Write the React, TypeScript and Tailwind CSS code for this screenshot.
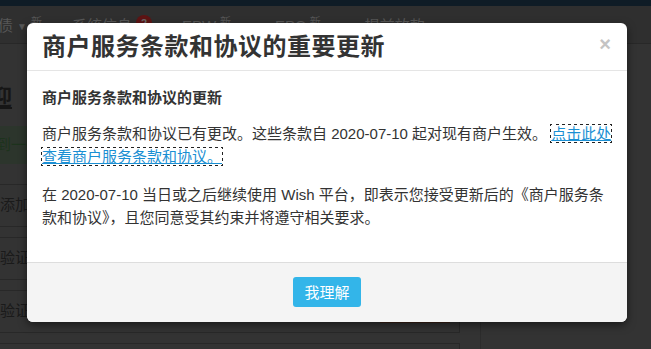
import React from "react";

const font = { fontFamily: '"Liberation Sans", Arial, "Noto Sans CJK SC", sans-serif' };

function NavItem({ children }: { children: React.ReactNode }) {
  return <div className="flex items-start gap-1 text-[15px] text-[#575757] whitespace-nowrap">{children}</div>;
}

export default function App() {
  return (
    <div className="relative w-[651px] h-[349px] overflow-hidden bg-[#333333]" style={font}>
      {/* background page (dimmed) */}
      <div className="flex flex-col h-full">
        <div className="h-[6px] shrink-0 bg-[#0f1c26]" />
        <div className="h-[38px] shrink-0 bg-[#2f2f2f] border-b border-[#282828] flex items-center gap-[30px] pt-[4px]">
          <NavItem>
            <span className="-ml-[2px]">债</span>
            <span className="text-[10px] mt-[4px]">▼</span>
            <span className="text-[11px] -mt-[1px]">新</span>
          </NavItem>
          <NavItem>
            <span>系统信息</span>
            <span className="w-[16px] h-[16px] rounded-full bg-[#5e1414] text-[#6a6a6a] text-[11px] font-bold flex items-center justify-center">2</span>
          </NavItem>
          <NavItem>
            <span>EPW</span>
            <span className="text-[11px] -mt-[1px]">新</span>
            <span className="text-[10px] mt-[4px]">▼</span>
          </NavItem>
          <NavItem>
            <span>EPC</span>
            <span className="text-[11px] -mt-[1px]">新</span>
            <span className="text-[10px] mt-[4px]">▼</span>
          </NavItem>
          <NavItem>
            <span>提前放款</span>
          </NavItem>
        </div>
        <div className="flex flex-1 min-h-0">
          <div className="w-[480px] shrink-0 flex flex-col">
            <div className="h-[82px] shrink-0 flex items-end pb-[17px]">
              <span className="text-[22px] font-bold text-[#161616] underline -ml-[10px] leading-none">迎</span>
            </div>
            <div className="h-[38px] shrink-0 bg-[#2c352c] flex items-center text-[15px] text-[#1d331d] -ml-[4px] w-[440px]">到一些</div>
            <div className="h-[20px] shrink-0" />
            <div className="w-[460px] flex flex-col gap-[10px]">
              <div className="h-[43px] shrink-0 border-y border-[#282828] flex items-center text-[15px] text-[#1a1a1a]">添加</div>
              <div className="h-[43px] shrink-0 border border-l-0 border-[#282828] flex items-center text-[15px] text-[#1a1a1a]">验证</div>
              <div className="h-[43px] shrink-0 border border-l-0 border-[#282828] flex items-center justify-between text-[15px] text-[#1a1a1a]">
                <span>验证</span>
                <span className="w-[70px] h-[22px] self-end mb-[9px] mr-[9px] bg-[#3a2318]" />
              </div>
              <div className="h-[43px] shrink-0 border border-l-0 border-[#282828]" />
            </div>
          </div>
          <div className="flex-1 border-l border-[#2c2c2c]" />
        </div>
      </div>

      {/* modal */}
      <div className="absolute left-[27px] top-[23px] w-[600px] bg-white rounded-[6px] shadow-[0_3px_9px_rgba(0,0,0,0.5)] overflow-hidden">
        <div className="h-[48px] border-b border-[#e5e5e5] flex items-center justify-between pl-[15px] pr-[16px]">
          <h3 className="text-[24px] font-bold text-[#333] tracking-[0.5px] leading-none">商户服务条款和协议的重要更新</h3>
          <span className="text-[20px] font-bold text-[#c4c4c4] leading-none -mt-[6px]">×</span>
        </div>
        <div className="px-[15px] pt-[15px] pb-[33px] text-[15px] leading-[23px] text-[#333]">
          <p className="font-bold mb-[13px]">商户服务条款和协议的更新</p>
          <p className="mb-[15px]">
            商户服务条款和协议已有更改。这些条款自 2020-07-10 起对现有商户生效。{" "}
            <a className="text-[#1a8fd3] underline outline outline-1 outline-dotted outline-[#222]">
              点击此处<br />查看商户服务条款和协议。
            </a>
          </p>
          <p>
            在 2020-07-10 当日或之后继续使用 Wish 平台，即表示您接受更新后的《商户服务条款和协议》，且您同意受其约束并将遵守相关要求。
          </p>
        </div>
        <div className="border-t border-[#dddddd] bg-[#f4f4f4] h-[60px] flex items-start justify-center pt-[14px]">
          <button className="w-[68px] h-[30px] rounded-[3px] bg-[#33b5e9] text-white text-[15px] leading-none">我理解</button>
        </div>
      </div>
    </div>
  );
}
